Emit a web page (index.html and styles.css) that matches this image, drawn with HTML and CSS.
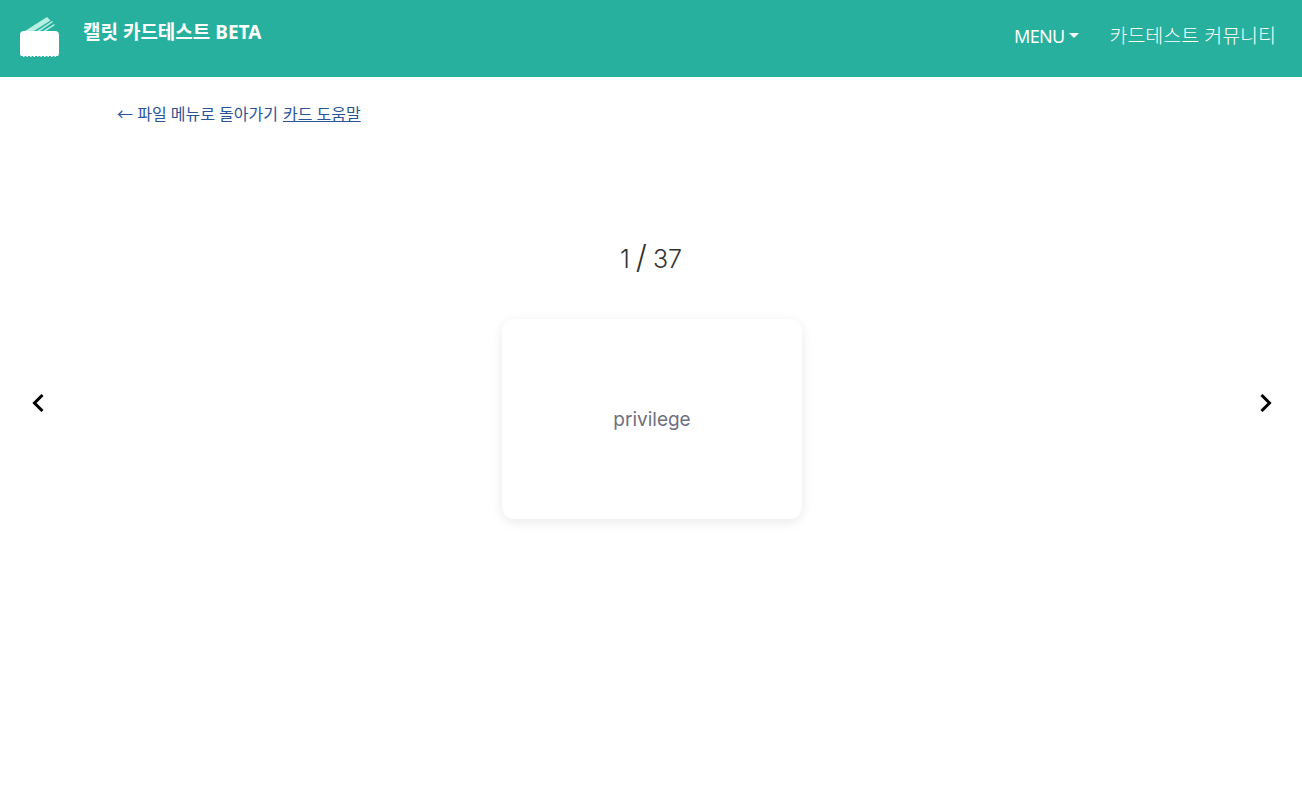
FILE: index.html
```html
<!DOCTYPE html>
<html lang="ko">
  <head>
    <meta charset="utf-8">
    <title>캘릿 카드테스트 BETA</title>
    <link rel="stylesheet" href="styles.css">
  </head>
  <body>
    <nav class="navbar">
      <a class="brand" href="#">
        <svg class="brand-logo" width="40" height="42" viewBox="0 0 40 42">
          <path d="M5 15 L27 1 L30.5 4.5 L14 15 Z" fill="#b5f0e2"/>
          <path d="M17 15 L32 5 L33 6 L20 15 Z" fill="#b5f0e2"/>
          <path d="M23 15 L34 8 L35 9 L26 15 Z" fill="#b5f0e2"/>
          <path d="M4 15 H35 Q39 15 39 19 V37 Q39 41 35 41 H4 Q0 41 0 37 V19 Q0 15 4 15 Z" fill="#fff"/>
          <path d="M1 40.5 H38" stroke="#27b09d" stroke-width="1" stroke-dasharray="2 1.5"/>
        </svg>
        <span class="brand-name">캘릿 카드테스트 BETA</span>
      </a>
      <div class="nav-links">
        <a class="nav-menu" href="#">MENU<span class="caret"></span></a>
        <a class="nav-community" href="#">카드테스트 커뮤니티</a>
      </div>
    </nav>

    <div class="back-row">
      <a class="back-link" href="#">← 파일 메뉴로 돌아가기</a>
      <a class="help-link" href="#">카드 도움말</a>
    </div>

    <div class="counter">1 <span class="slash">/</span> 37</div>

    <div class="stage">
      <button class="arrow">
        <svg width="14" height="18" viewBox="0 0 14 18"><path d="M11.5 1 L3.5 9 L11.5 17" fill="none" stroke="#000" stroke-width="3"/></svg>
      </button>
      <div class="card">privilege</div>
      <button class="arrow arrow-next">
        <svg width="14" height="18" viewBox="0 0 14 18"><path d="M2.5 1 L10.5 9 L2.5 17" fill="none" stroke="#000" stroke-width="3"/></svg>
      </button>
    </div>
  </body>
</html>
```

FILE: styles.css
```css
body {
  margin: 0;
  background-color: #fff;
  font-family: "Noto Sans", "Noto Sans CJK KR", sans-serif;
}

a {
  text-decoration: none;
}

.navbar {
  height: 77px;
  background-color: #27b09d;
  display: flex;
  justify-content: space-between;
  padding: 0 26px 0 20px;
}

.brand {
  display: flex;
  align-items: flex-start;
  color: #fff;
}

.brand-logo {
  margin-top: 16px;
}

.brand-name {
  margin: 20px 0 0 23px;
  font-size: 19px;
  line-height: 24px;
  font-weight: 700;
}

.nav-links {
  display: flex;
  align-items: center;
  gap: 30px;
  color: #fff;
  padding-bottom: 8px;
}

.nav-links a {
  color: #fff;
}

.nav-menu {
  font-size: 18px;
  letter-spacing: -0.7px;
  display: flex;
  align-items: center;
  padding-top: 2px;
}

.caret {
  margin-left: 5px;
  border-top: 5px solid #fff;
  border-left: 5px solid transparent;
  border-right: 5px solid transparent;
}

.nav-community {
  font-size: 19.5px;
  font-weight: 300;
}

.back-row {
  padding: 26px 0 0 117px;
  font-size: 16px;
  line-height: 22px;
  display: flex;
  gap: 5px;
}

.back-link {
  color: #2a5599;
}

.help-link {
  color: #2a5599;
  text-decoration: underline;
}

.counter {
  margin-top: 114px;
  text-align: center;
  font-family: Inter, "Noto Sans", sans-serif;
  font-weight: 300;
  font-size: 25px;
  line-height: 40px;
  word-spacing: -1px;
  color: #333;
}

.slash {
  font-size: 32px;
  line-height: 1;
  font-weight: 300;
}

.stage {
  margin-top: 40px;
  display: grid;
  grid-template-columns: 1fr 300px 1fr;
  align-items: start;
  padding: 0 29px 60px 31px;
}

.arrow {
  background: none;
  border: none;
  padding: 0;
  margin-top: 75px;
  justify-self: start;
  line-height: 0;
}

.arrow-next {
  justify-self: end;
}

.card {
  height: 200px;
  background-color: #fff;
  border-radius: 12px;
  box-shadow: 0 3px 12px rgba(0, 0, 0, 0.09);
  display: flex;
  align-items: center;
  justify-content: center;
  font-family: Inter, "Noto Sans", sans-serif;
  font-size: 19px;
  color: #6e7080;
}
```
